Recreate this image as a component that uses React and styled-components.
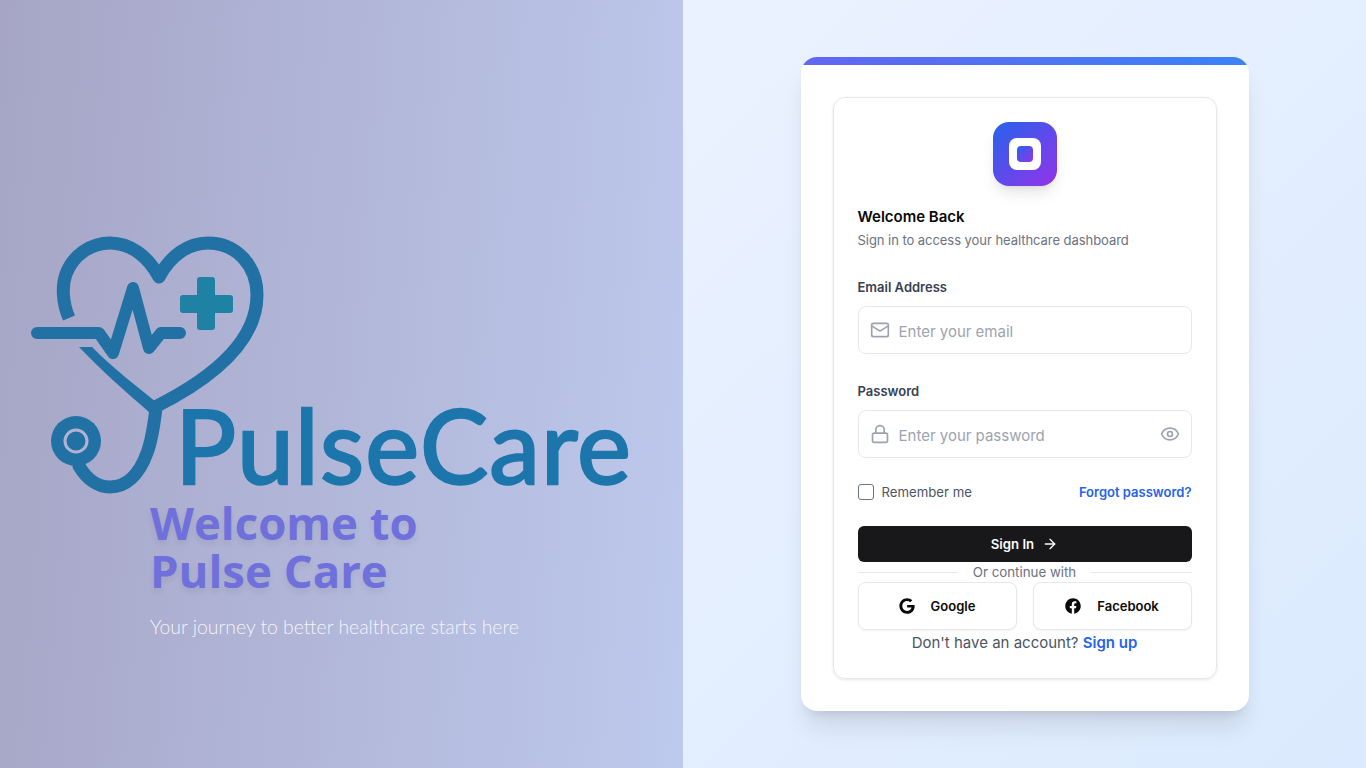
import React from "react"
import styled, { createGlobalStyle } from "styled-components"
import { Mail, Lock, Eye, ArrowRight } from "lucide-react"
import { FaGoogle, FaFacebook } from "react-icons/fa"

const GlobalStyle = createGlobalStyle`
  * { box-sizing: border-box; }
  html, body { margin: 0; padding: 0; height: 100%; }
  body { font-family: Inter, "Liberation Sans", sans-serif; }
`

const Page = styled.div`
  display: grid;
  grid-template-columns: 683px 683px;
  width: 1366px;
  height: 768px;
  overflow: hidden;
`

const Hero = styled.section`
  display: flex;
  flex-direction: column;
  justify-content: center;
  background: linear-gradient(95deg, #a6a5c5 0%, #bdc9ed 100%);
`

const LogoArt = styled.svg`
  display: block;
  width: 683px;
  height: 371px;
  flex: none;
  overflow: visible;
`

const LogoWord = styled.text`
  font-family: Lato, "Noto Sans", sans-serif;
  font-size: 102px;
  font-weight: 400;
  letter-spacing: 1.1px;
  fill: #1c76ab;
  stroke: #1c76ab;
  stroke-width: 2.4px;
`

const HeroCopy = styled.div`
  padding-left: 150px;
`

const HeroTitle = styled.h1`
  margin: -1px 0 0;
  font-family: "Open Sans", "Noto Sans", sans-serif;
  font-size: 45.5px;
  line-height: 48px;
  font-weight: 700;
  color: #7070dc;
  text-shadow: 0 4px 6px rgba(0, 0, 0, 0.07);
`

const HeroSub = styled.p`
  margin: 20px 0 0;
  font-family: Lato, "Open Sans", sans-serif;
  font-size: 19.4px;
  line-height: 26px;
  font-weight: 300;
  color: rgba(255, 255, 255, 0.88);
`

const Side = styled.section`
  display: flex;
  align-items: center;
  justify-content: center;
  background: linear-gradient(135deg, #ebf2ff 0%, #dbeafe 100%);
`

const Card = styled.div`
  width: 448px;
  height: 654px;
  padding: 40px 32px 32px;
  background: #fff;
  border-radius: 16px;
  overflow: hidden;
  position: relative;
  box-shadow: 0 20px 25px -5px rgba(0, 0, 0, 0.1), 0 8px 10px -6px rgba(0, 0, 0, 0.1);
  &::before {
    content: "";
    position: absolute;
    top: 0;
    left: 0;
    right: 0;
    height: 8px;
    background: linear-gradient(90deg, #6366f1, #3b82f6);
  }
`

const Inner = styled.div`
  height: 582px;
  padding: 24px;
  border: 1px solid #e5e7eb;
  border-radius: 12px;
  box-shadow: 0 1px 3px rgba(0, 0, 0, 0.1);
`

const Badge = styled.div`
  width: 64px;
  height: 64px;
  margin: 0 auto 21px;
  display: flex;
  align-items: center;
  justify-content: center;
  border-radius: 16px;
  background: linear-gradient(135deg, #2563eb, #9333ea);
  box-shadow: 0 10px 15px -3px rgba(0, 0, 0, 0.1), 0 4px 6px -4px rgba(0, 0, 0, 0.1);
`

const BadgeInner = styled.div`
  width: 32px;
  height: 32px;
  display: flex;
  align-items: center;
  justify-content: center;
  border-radius: 8px;
  background: #fff;
`

const BadgeDot = styled.div`
  width: 16px;
  height: 16px;
  border-radius: 4px;
  background: linear-gradient(135deg, #2563eb, #9333ea);
`

const Title = styled.h2`
  margin: 0;
  font-size: 15px;
  line-height: 20px;
  font-weight: 600;
  color: #0a0a0a;
`

const Subtitle = styled.p`
  margin: 3px 0 0;
  font-size: 13px;
  line-height: 20px;
  letter-spacing: -0.05px;
  color: #6b7280;
`

const Field = styled.div`
  margin-top: ${({ $top }) => $top}px;
`

const Label = styled.label`
  display: block;
  margin-bottom: 9px;
  font-size: 13px;
  line-height: 20px;
  font-weight: 600;
  color: #374151;
`

const InputBox = styled.div`
  height: 48px;
  padding: 0 11px;
  display: flex;
  align-items: center;
  gap: 9px;
  border: 1px solid #e5e7eb;
  border-radius: 8px;
  color: #9ca3af;
`

const Input = styled.input`
  flex: 1;
  min-width: 0;
  border: 0;
  outline: 0;
  padding: 2px 0 0;
  background: transparent;
  font: 400 15px Inter, sans-serif;
  &::placeholder { color: #9ca3af; opacity: 1; }
`

const OptionsRow = styled.div`
  margin-top: 24px;
  height: 20px;
  display: flex;
  align-items: center;
  justify-content: space-between;
`

const Remember = styled.label`
  display: flex;
  align-items: center;
  gap: 8px;
  font-size: 13.2px;
  color: #4b5563;
`

const Check = styled.span`
  width: 16px;
  height: 16px;
  border: 1px solid #6b7280;
  border-radius: 3px;
  background: #fff;
`

const Forgot = styled.a`
  font-size: 13px;
  font-weight: 600;
  color: #2563eb;
`

const SignIn = styled.button`
  width: 100%;
  height: 36px;
  margin-top: 24px;
  display: flex;
  align-items: center;
  justify-content: center;
  gap: 8px;
  border: 0;
  border-radius: 6px;
  background: #18181b;
  color: #fafafa;
  font: 600 13.2px Inter, sans-serif;
`

const Divider = styled.div`
  height: 20px;
  display: flex;
  align-items: center;
  &::before, &::after {
    content: "";
    flex: 1;
    height: 1px;
    background: #e5e7eb;
  }
`

const DividerText = styled.span`
  padding: 0 15px;
  font-size: 13.3px;
  line-height: 20px;
  color: #6b7280;
`

const Socials = styled.div`
  display: grid;
  grid-template-columns: 1fr 1fr;
  gap: 16px;
`

const SocialButton = styled.button`
  height: 48px;
  display: flex;
  align-items: center;
  justify-content: center;
  gap: 16px;
  border: 1px solid #e5e7eb;
  border-radius: 8px;
  background: #fff;
  box-shadow: 0 1px 2px rgba(0, 0, 0, 0.05);
  color: #0a0a0a;
  font: 600 13px Inter, sans-serif;
`

const SignUpLine = styled.p`
  margin: 0;
  height: 26px;
  text-align: center;
  font-size: 15px;
  line-height: 26px;
  color: #4b5563;
`

const SignUpLink = styled.a`
  font-weight: 600;
  color: #2563eb;
`

const Logo = () => (
  <LogoArt viewBox="0 128 683 371" role="img" aria-label="PulseCare logo">
    <path
      d="M69 318 C62 302 62 285 66 274 C73 255 91 243 110 243 C130 243 148 256 159 277 C170 256 188 243 208 243 C236 243 257 265 257 295 C257 345 205 382 155 407"
      fill="none"
      stroke="#2271a5"
      strokeWidth="13"
      strokeLinejoin="round"
    />
    <path d="M79 347 L92 347 C112 367 135 385 156 402 L162 412 L150 413 C126 392 102 371 79 347 z" fill="#2271a5" />
    <path
      d="M156 408 C154 425 152 440 147 453 C139 475 126 487 110 487 C97 487 86 478 79 466"
      fill="none"
      stroke="#2271a5"
      strokeWidth="13"
      strokeLinecap="round"
    />
    <path
      d="M37 333 L99 333 L113 353 L133 288 L149 348 L161 333 L180 333"
      fill="none"
      stroke="#2271a5"
      strokeWidth="12"
      strokeLinecap="round"
      strokeLinejoin="round"
    />
    <path
      d="M200 277 h12 a3 3 0 0 1 3 3 v15 h15 a3 3 0 0 1 3 3 v12 a3 3 0 0 1 -3 3 h-15 v14 a3 3 0 0 1 -3 3 h-12 a3 3 0 0 1 -3 -3 v-14 h-14 a3 3 0 0 1 -3 -3 v-12 a3 3 0 0 1 3 -3 h14 v-15 a3 3 0 0 1 3 -3 z"
      fill="#1f82a5"
    />
    <circle cx="76" cy="441" r="25" fill="#2271a5" />
    <circle cx="76" cy="441" r="11" fill="#2271a5" stroke="#b2b2d2" strokeWidth="3" />
    <LogoWord x="175" y="484">PulseCare</LogoWord>
  </LogoArt>
)

const App = () => {
  return (
    <Page>
      <GlobalStyle />
      <Hero>
        <Logo />
        <HeroCopy>
          <HeroTitle>Welcome to<br />Pulse Care</HeroTitle>
          <HeroSub>Your journey to better healthcare starts here</HeroSub>
        </HeroCopy>
      </Hero>
      <Side>
        <Card>
          <Inner>
            <Badge>
              <BadgeInner>
                <BadgeDot />
              </BadgeInner>
            </Badge>
            <Title>Welcome Back</Title>
            <Subtitle>Sign in to access your healthcare dashboard</Subtitle>
            <Field $top={27}>
              <Label>Email Address</Label>
              <InputBox>
                <Mail size={20} />
                <Input placeholder="Enter your email" />
              </InputBox>
            </Field>
            <Field $top={27}>
              <Label>Password</Label>
              <InputBox>
                <Lock size={20} />
                <Input placeholder="Enter your password" />
                <Eye size={20} />
              </InputBox>
            </Field>
            <OptionsRow>
              <Remember><Check />Remember me</Remember>
              <Forgot>Forgot password?</Forgot>
            </OptionsRow>
            <SignIn>Sign In <ArrowRight size={16} /></SignIn>
            <Divider><DividerText>Or continue with</DividerText></Divider>
            <Socials>
              <SocialButton><FaGoogle size={16} />Google</SocialButton>
              <SocialButton><FaFacebook size={16} />Facebook</SocialButton>
            </Socials>
            <SignUpLine>Don't have an account? <SignUpLink>Sign up</SignUpLink></SignUpLine>
          </Inner>
        </Card>
      </Side>
    </Page>
  )
}

export default App
